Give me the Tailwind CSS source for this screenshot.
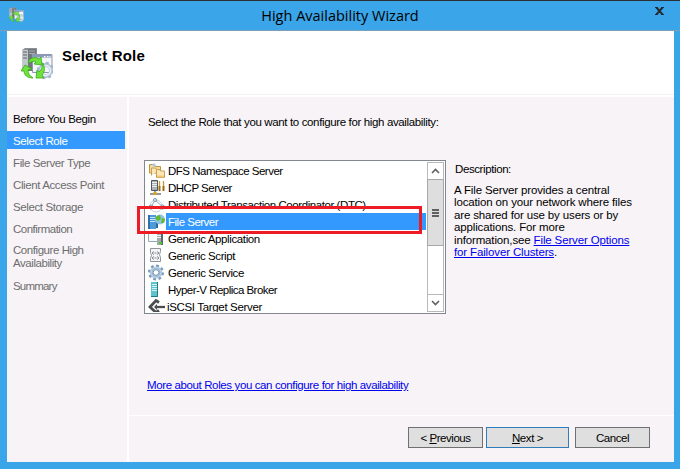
<!DOCTYPE html>
<html lang="en">
<head>
<meta charset="utf-8">
<title>High Availability Wizard</title>
<script src="https://cdn.jsdelivr.net/npm/@tailwindcss/browser@4"></script>
</head>
<body class="w-[680px] h-[469px] overflow-hidden bg-[#3aa5e8] text-[11.5px] text-black font-['Liberation_Sans',Arial,sans-serif] whitespace-nowrap">
<svg width="0" height="0" class="absolute">
  <defs>
    <symbol id="wizard" viewBox="0 0 32 32">
      <path d="M1 2l3-2h12v23H1z" fill="#8b9096"/><path d="M1 2h6v21H1z" fill="#c3c8cc"/><path d="M7 1h8v22H7z" fill="#70767c"/>
      <path d="M2 4h4M2 7h4M2 10h4" stroke="#5d646b"/><path d="M8 3h6M8 5.500h6" stroke="#a9afb5"/>
      <path d="M11.500 6.500h19.500v18H11.500z" fill="#f3f6fa" stroke="#8d97b0"/><path d="M12 7h18.500v2.500H12z" fill="#8a9aba"/>
      <path d="M23 8.500h1.500M26 8.500h1.500M28.500 8.500h1" stroke="#fff"/>
      <circle cx="24.500" cy="22.500" r="5.500" fill="none" stroke="#b4c6d8" stroke-width="4"/>
      <circle cx="24.500" cy="22.500" r="7.700" fill="none" stroke="#a3b6ca" stroke-width="2" stroke-dasharray="3 3.050"/>
      <circle cx="24.500" cy="22.500" r="5" fill="none" stroke="#e9f1f8" stroke-width="1.500"/>
      <path d="M7 15c1-5 7-7 11-4l2-2 1 8-8-1 2-2c-3-1-5 0-8 1z" fill="#6ee33c" stroke="#3aa71d" stroke-width=".8"/>
      <path d="M0 23l4-6 7 4-4 1c0 4 2 6 5 8-6 0-9-3-9-7z" fill="#6ee33c" stroke="#3aa71d" stroke-width=".8"/>
      <path d="M22 15c2 5 2 9-1 12l2 3-8 0 1-8 2 2c2-2 3-4 4-9z" fill="#6ee33c" stroke="#3aa71d" stroke-width=".8"/>
    </symbol>
  </defs>
</svg>
<div class="h-full flex flex-col border-t border-[#2c3033]">
  <header class="h-[30px] relative flex items-center justify-center border-b border-[#7d9fb8]">
    <svg class="absolute left-[9px] top-[6px]" width="15" height="16"><use href="#wizard"/></svg>
    <h1 class="text-[14.5px] leading-[20px] pt-px font-['Open_Sans',sans-serif]">High Availability Wizard</h1>
    <svg class="absolute left-[655px] top-[6px]" width="9" height="8" viewBox="0 0 9 8" fill="none" stroke="#252b33"><path d="M1.500 .5l6 7M7.500 .5l-6 7" stroke-width="2"/><path d="M0 .5h3M6 .5h3M0 7.500h3M6 7.500h3"/></svg>
  </header>

  <div class="w-[667px] h-[431px] ml-[7px] flex flex-col bg-white">
    <div class="h-[63px] flex pl-[14px] pt-[16px] gap-[9px]">
      <svg class="mt-px" width="32" height="32"><use href="#wizard"/></svg>
      <h2 class="text-[15px] leading-[17px] font-bold tracking-[0.19px]">Select Role</h2>
    </div>
    <div class="h-px bg-[#f3f1f4] mb-[2px]"></div>

    <div class="flex-1 flex">
      <nav class="w-[120px] bg-[#f7f3f7] pt-[13px] text-[#6d6d6d] leading-[18px] tracking-[-0.39px]">
        <div class="pl-[6px] text-black mb-[3px]">Before You Begin</div>
        <div class="w-[118px] pl-[6px] pt-px h-[18px] bg-[#3399ff] text-white mb-[4px]">Select Role</div>
        <div class="pl-[6px] mb-[4px] pt-px">File Server Type</div>
        <div class="pl-[6px] mb-[4px]">Client Access Point</div>
        <div class="pl-[6px] mb-[4px]">Select Storage</div>
        <div class="pl-[6px] mb-[5px] tracking-[-0.5px]">Confirmation</div>
        <div class="pl-[6px] leading-[13px] pt-px mb-[7px] tracking-[-0.44px]">Configure High<br>Availability</div>
        <div class="pl-[6px] tracking-[-0.8px]">Summary</div>
      </nav>

      <main class="flex-1 ml-[2px] bg-[#f7f3f7] flex flex-col">
        <div class="h-[318px] pl-[15px]">
          <p class="pl-[4px] pt-[17px] leading-[16px] tracking-[-0.36px]">Select the Role that you want to configure for high availability:</p>
          <div class="flex mt-[30px]">
            <div class="relative w-[302px] h-[154px] border border-[#828790] bg-white p-px">
              <div class="flex h-[150px]">
                <ul class="w-[280px] h-[150px] overflow-hidden leading-[19px] tracking-[-0.45px] pl-px">
                  <li class="flex h-[17px]">
                    <svg width="19" height="17" viewBox="0 0 19 17"><path d="M2.500 11V2.500h5l1 2h5V11z" fill="#f5db9b" stroke="#bd9447"/><path d="M5 3l2-2 2 2-2 2z" fill="#a5cfea"/><path d="M9.500 15.500V7.500h3l1 1.500h4v6.500zM4.500 13.500V6h4l1 1.500h3" fill="#fbe8b4" stroke="#c8a055"/><path d="M10 14.500h7" stroke="#edc875" stroke-width="2"/></svg>
                    <span class="pl-[2px] tracking-[-0.5px]">DFS Namespace Server</span></li>
                  <li class="flex h-[17px]">
                    <svg width="19" height="17" viewBox="0 0 19 17"><path d="M4.500 1.500h6v10h-6z" fill="#aab0b6" stroke="#50565d"/><path d="M5 3.500h5M5 5.500h5M5 7.500h5" stroke="#e9edf0"/><path d="M8 12v3M3 15h11" stroke="#777" stroke-width="1.500"/><path d="M6.500 13h3v3h-3z" fill="#d5a51c"/><path d="M12.500 2v6M16.500 2v6" stroke="#c9973a" stroke-width="1.300"/><path d="M12.500 7v5M16.500 7v5" stroke="#9c6c12" stroke-width="2"/></svg>
                    <span class="pl-[2px] tracking-[-0.5px]">DHCP Server</span></li>
                  <li class="flex h-[17px]">
                    <svg width="19" height="17" viewBox="0 0 19 17" fill="none" stroke="#7f98b0"><path d="M3 10a6 6 0 0 1 12 0 6 6 0 0 1-12 0" stroke="#c3d1de"/><path d="M8 4L4 11l12 0z" stroke="#91a9bf"/><circle cx="8" cy="4" r="1.500" fill="#dcebf5"/><circle cx="4" cy="11" r="2" fill="#dcebf5"/><circle cx="15.500" cy="11" r="2" fill="#dcebf5"/></svg>
                    <span class="pl-[2px] tracking-[-0.43px]">Distributed Transaction Coordinator (DTC)</span></li>
                  <li class="flex h-[17px]">
                    <svg width="19" height="17" viewBox="0 0 19 17"><path d="M1 2h8v14H1z" fill="#4f9bd8"/><path d="M1 2h2v14H1z" fill="#2e70ae"/><path d="M3 4.500h5M3 6.500h5M3 8.500h5" stroke="#c1e3f7"/><path d="M10 15V4" stroke="#2468a4" stroke-width="2"/><circle cx="13" cy="6.500" r="5" fill="#8cc5e7"/><path d="M10 3l3-1 1 4-3 2-3-3zM15 5l3 1-1 4-3 0z" fill="#65b92d"/></svg>
                    <span class="flex-1 bg-[#3399ff] text-white pl-[2px] h-[17px] tracking-[-0.5px]">File Server</span></li>
                  <li class="flex h-[17px]">
                    <svg width="19" height="17" viewBox="0 0 19 17"><path d="M1.500 2.500h10v9h-10z" fill="#f8fafc" stroke="#9ba5af"/><path d="M2 3.500h9" stroke="#6c8eb4"/><path d="M10 2h6v13h-6z" fill="#a4a9ae"/><path d="M14 2h2v13h-2z" fill="#60666d"/><path d="M10 5.500h4M10 7.500h4" stroke="#f0f2f4"/><path d="M12 12h3v2h-3z" fill="#49cc28"/></svg>
                    <span class="pl-[2px] tracking-[-0.38px]">Generic Application</span></li>
                  <li class="flex h-[17px]">
                    <svg width="19" height="17" viewBox="0 0 19 17"><path d="M3.500 1.500h10v3l-1 3 1 3v4h-10v-3l1-3-1-3z" fill="#f5f5f7" stroke="#91949a"/><path d="M7 4.500l-2 1.500 2 1.500M10 4.500l2 1.500-2 1.500M7 9.500l-2 1.500 2 1.500M10 9.500l2 1.500-2 1.500M7.500 6h2M7.500 11h2" fill="none" stroke="#676b73" stroke-width=".8"/></svg>
                    <span class="pl-[2px] tracking-[-0.42px]">Generic Script</span></li>
                  <li class="flex h-[17px]">
                    <svg width="19" height="17" viewBox="0 0 19 17" fill="none"><circle cx="9" cy="8.500" r="6.800" stroke="#7898b8" stroke-width="2.400" stroke-dasharray="2.700 2.640"/><circle cx="9" cy="8.500" r="4.500" stroke="#9ab8d4" stroke-width="3.200"/><circle cx="9" cy="8.500" r="5" stroke="#c7dded"/><circle cx="9" cy="8.500" r="2.800" fill="#fff" stroke="#7d9ab5"/></svg>
                    <span class="pl-[2px] tracking-[-0.39px]">Generic Service</span></li>
                  <li class="flex h-[17px]">
                    <svg width="19" height="17" viewBox="0 0 19 17"><path d="M4 1h7v15H4z" fill="#5fc2cd"/><path d="M10 1h1v15h-1zM4 15h7v1H4z" fill="#247985"/><path d="M5 3.500h5M5 5.500h5M5 7.500h5M5 9.500h5" stroke="#d2f4f6"/></svg>
                    <span class="pl-[2px] tracking-[-0.53px]">Hyper-V Replica Broker</span></li>
                  <li class="flex h-[17px]">
                    <svg width="19" height="17" viewBox="0 0 19 17" fill="none" stroke="#4b4d50"><path d="M12 4.500L9 2.500 3 9l6 5.500 3-2" stroke-width="2.800"/><path d="M8.500 9h9.500" stroke-width="2.300"/><path d="M7 9l3-3v6z" fill="#4b4d50" stroke="none"/></svg>
                    <span class="pl-px tracking-[-0.34px]">iSCSI Target Server</span></li>
                </ul>
                <div class="w-[17px] ml-px h-[150px] flex flex-col border border-[#b9b9b9]">
                  <div class="h-[16px] grid place-items-center"><svg width="9" height="6" fill="none" stroke="#606060" stroke-width="1.600"><path d="M1 5l3.500-3.500L8 5"/></svg></div>
                  <div class="h-[67px] -mx-px border border-[#a8a8a8] bg-[#dedede] flex flex-col items-center justify-center gap-px">
                    <i class="w-[7px] h-[2px] bg-[#606060]"></i><i class="w-[7px] h-[2px] bg-[#606060]"></i><i class="w-[7px] h-[2px] bg-[#606060]"></i>
                  </div>
                  <div class="flex-1"></div>
                  <div class="h-[17px] border-t border-[#b9b9b9] grid place-items-center"><svg width="9" height="6" fill="none" stroke="#606060" stroke-width="1.600"><path d="M1 1l3.500 3.500L8 1"/></svg></div>
                </div>
              </div>
              <div class="absolute -left-[8px] top-[45px] w-[285px] h-[28px] border-3 border-[#ed1c24]"></div>
            </div>
            <div class="pl-[8px] pt-px">
              <p class="pl-px leading-[16px] tracking-[-0.4px]">Description:</p>
              <p class="pt-[7px] leading-[12.4px] tracking-[-0.14px]">A File Server provides a central<br>location on your network where files<br>are shared for use by users or by<br>applications. For more<br>information,see <a class="text-[#0000f0] underline">File Server Options</a><br><a class="text-[#0000f0] underline">for Failover Clusters</a>.</p>
            </div>
          </div>
          <p class="pl-[3px] pt-[63px] leading-[16px] tracking-[-0.38px]"><a class="text-[#0000f0] underline">More about Roles you can configure for high availability</a></p>
        </div>
        <div class="h-px bg-white"></div>
        <footer class="flex pt-[11px] pl-[279px] leading-[20px] text-center">
          <button class="w-[75px] h-[21px] bg-[#dfdfdf] border border-[#707070] tracking-[-0.45px] mr-[3px]">&lt; <u>P</u>revious</button>
          <button class="w-[83px] h-[21px] bg-[#dfdfdf] border border-[#2f7dbb] tracking-[-0.4px] mr-[6px]"><u>N</u>ext &gt;</button>
          <button class="w-[75px] h-[21px] bg-[#dfdfdf] border border-[#707070] tracking-[-0.45px]">Cancel</button>
        </footer>
      </main>
    </div>
  </div>
</div>
</body>
</html>
